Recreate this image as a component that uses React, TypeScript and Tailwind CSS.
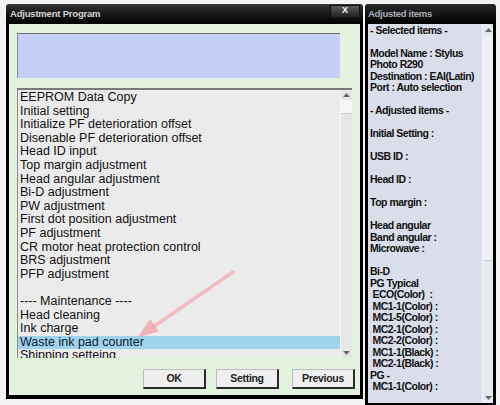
import React from "react";

const listItems = [
  "EEPROM Data Copy",
  "Initial setting",
  "Initialize PF deterioration offset",
  "Disenable PF deterioration offset",
  "Head ID input",
  "Top margin adjustment",
  "Head angular adjustment",
  "Bi-D adjustment",
  "PW adjustment",
  "First dot position adjustment",
  "PF adjustment",
  "CR motor heat protection control",
  "BRS adjustment",
  "PFP adjustment",
  "",
  "---- Maintenance ----",
  "Head cleaning",
  "Ink charge",
  "Waste ink pad counter",
  "Shipping setteing",
];

const adjustedLines = [
  "- Selected items -",
  "",
  "Model Name : Stylus",
  "Photo R290",
  "Destination : EAI(Latin)",
  "Port : Auto selection",
  "",
  "- Adjusted items -",
  "",
  "Initial Setting :",
  "",
  "USB ID :",
  "",
  "Head ID :",
  "",
  "Top margin :",
  "",
  "Head angular",
  "Band angular :",
  "Microwave :",
  "",
  "Bi-D",
  "PG Typical",
  " ECO(Color)  :",
  " MC1-1(Color) :",
  " MC1-5(Color) :",
  " MC2-1(Color) :",
  " MC2-2(Color) :",
  " MC1-1(Black) :",
  " MC2-1(Black) :",
  "PG -",
  " MC1-1(Color) :",
];

const SELECTED = "Waste ink pad counter";

const Button = ({ label, className }: { label: string; className?: string }) => (
  <div
    className={
      "w-[63px] h-[20px] flex items-center justify-center bg-[#efefef] border-t border-l border-t-[#bdbdbd] border-l-[#bdbdbd] border-r-2 border-b-2 border-r-[#2a2a2a] border-b-[#2a2a2a] text-[10.5px] font-bold text-[#222] tracking-[-0.3px] " +
      (className || "")
    }
  >
    {label}
  </div>
);

const UpArrow = () => (
  <svg width="7" height="4" viewBox="0 0 7 4">
    <path d="M0 4 L3.5 0 L7 4 Z" fill="#6a6a6a" />
  </svg>
);

const DownArrow = () => (
  <svg width="7" height="4" viewBox="0 0 7 4">
    <path d="M0 0 L3.5 4 L7 0 Z" fill="#6a6a6a" />
  </svg>
);

export default function App() {
  return (
    <div
      className="relative w-[500px] h-[405px] overflow-hidden bg-[#f4f4f4] flex items-start pt-[4px] pl-[6px] gap-[2px]"
      style={{ fontFamily: '"Liberation Sans", Arial, sans-serif' }}
    >
      {/* Adjustment Program window */}
      <div className="w-[357px] flex flex-col">
        <div className="h-[20px] rounded-t-[3px] bg-gradient-to-b from-[#333] to-[#030303] flex items-center justify-between pl-[4px] pr-[3px]">
          <span className="text-[9.5px] font-bold text-[#d4d4d4] tracking-[-0.2px]">Adjustment Program</span>
          <div className="w-[30px] h-[13px] -mt-[6px] rounded-b-[2px] bg-gradient-to-b from-[#5a5a5a] to-[#222] border border-[#111] flex items-center justify-center text-[9px] font-bold text-white">
            X
          </div>
        </div>
        <div className="h-[375px] border-x-[3px] border-b-[4px] border-black bg-[#e4f2e0] pt-[9px] pl-[8px] pr-[5px] flex flex-col">
          <div className="w-[323px] h-[45px] bg-[#c6cff7] border-t border-l border-t-[#6d6d6d] border-l-[#8a8a8a]" />
          <div className="mt-[10px] w-[335px] h-[270px] bg-[#ebebeb] border-t-2 border-l border-t-[#7a7a7a] border-l-[#8a8a8a] flex overflow-hidden">
            <div className="flex-1 pt-[1px] overflow-hidden">
              {listItems.map((item, i) => (
                <div
                  key={i}
                  className={
                    "h-[13.6px] leading-[13.6px] pl-[2px] text-[12.5px] whitespace-nowrap " +
                    (item === SELECTED ? "bg-[#9fd2ec] text-[#102030]" : "text-[#111]")
                  }
                >
                  {item}
                </div>
              ))}
            </div>
            <div className="w-[12px] h-full bg-[#e6e6e6] border-l border-[#f8f8f8] flex flex-col items-center">
              <div className="h-[10px] flex items-center justify-center">
                <UpArrow />
              </div>
              <div className="w-[11px] h-[14px] bg-[#f5f5f5] border-b border-[#cfcfcf]" />
              <div className="flex-1" />
              <div className="h-[10px] flex items-center justify-center">
                <DownArrow />
              </div>
            </div>
          </div>
          <div className="mt-[11px] flex justify-end">
            <Button label="OK" />
            <Button label="Setting" className="ml-[10px]" />
            <Button label="Previous" className="ml-[13px]" />
          </div>
        </div>
      </div>

      {/* Adjusted items panel */}
      <div className="w-[131px] flex flex-col">
        <div className="h-[20px] rounded-t-[3px] bg-gradient-to-b from-[#2a2a2a] to-[#030303] flex items-center pl-[3px]">
          <span className="text-[9.5px] font-bold text-[#a9adba] tracking-[-0.3px]">Adjusted items</span>
        </div>
        <div className="h-[382px] border-x-[3px] border-b-[3px] border-black bg-[#dadeea] flex">
          <div className="flex-1 pl-[2px] pt-[0.5px] overflow-hidden">
            {adjustedLines.map((line, i) => (
              <div
                key={i}
                className="h-[11.5px] leading-[11.5px] text-[10.5px] font-bold text-[#111] whitespace-pre tracking-[-0.5px]"
              >
                {line}
              </div>
            ))}
          </div>
          <div className="w-[11px] h-full bg-[#e7e9f0] border-l border-[#f4f5f9] flex flex-col items-center">
            <div className="h-[12px] flex items-center justify-center">
              <UpArrow />
            </div>
            <div className="w-[10px] h-[225px] bg-[#eef0f5] border-b border-[#c9ccd6]" />
            <div className="flex-1" />
            <div className="h-[10px] flex items-center justify-center">
              <DownArrow />
            </div>
          </div>
        </div>
      </div>

      {/* pink pointer arrow drawn over the list */}
      <svg
        className="absolute left-0 top-0 pointer-events-none"
        width="500"
        height="405"
        viewBox="0 0 500 405"
      >
        <line x1="233" y1="272" x2="153" y2="327" stroke="#f1b3ba" strokeWidth="3.5" strokeLinecap="round" opacity="0.85" />
        <polygon points="138,337 159,331.5 150,319" fill="#f0a9b1" opacity="0.85" />
      </svg>
    </div>
  );
}
